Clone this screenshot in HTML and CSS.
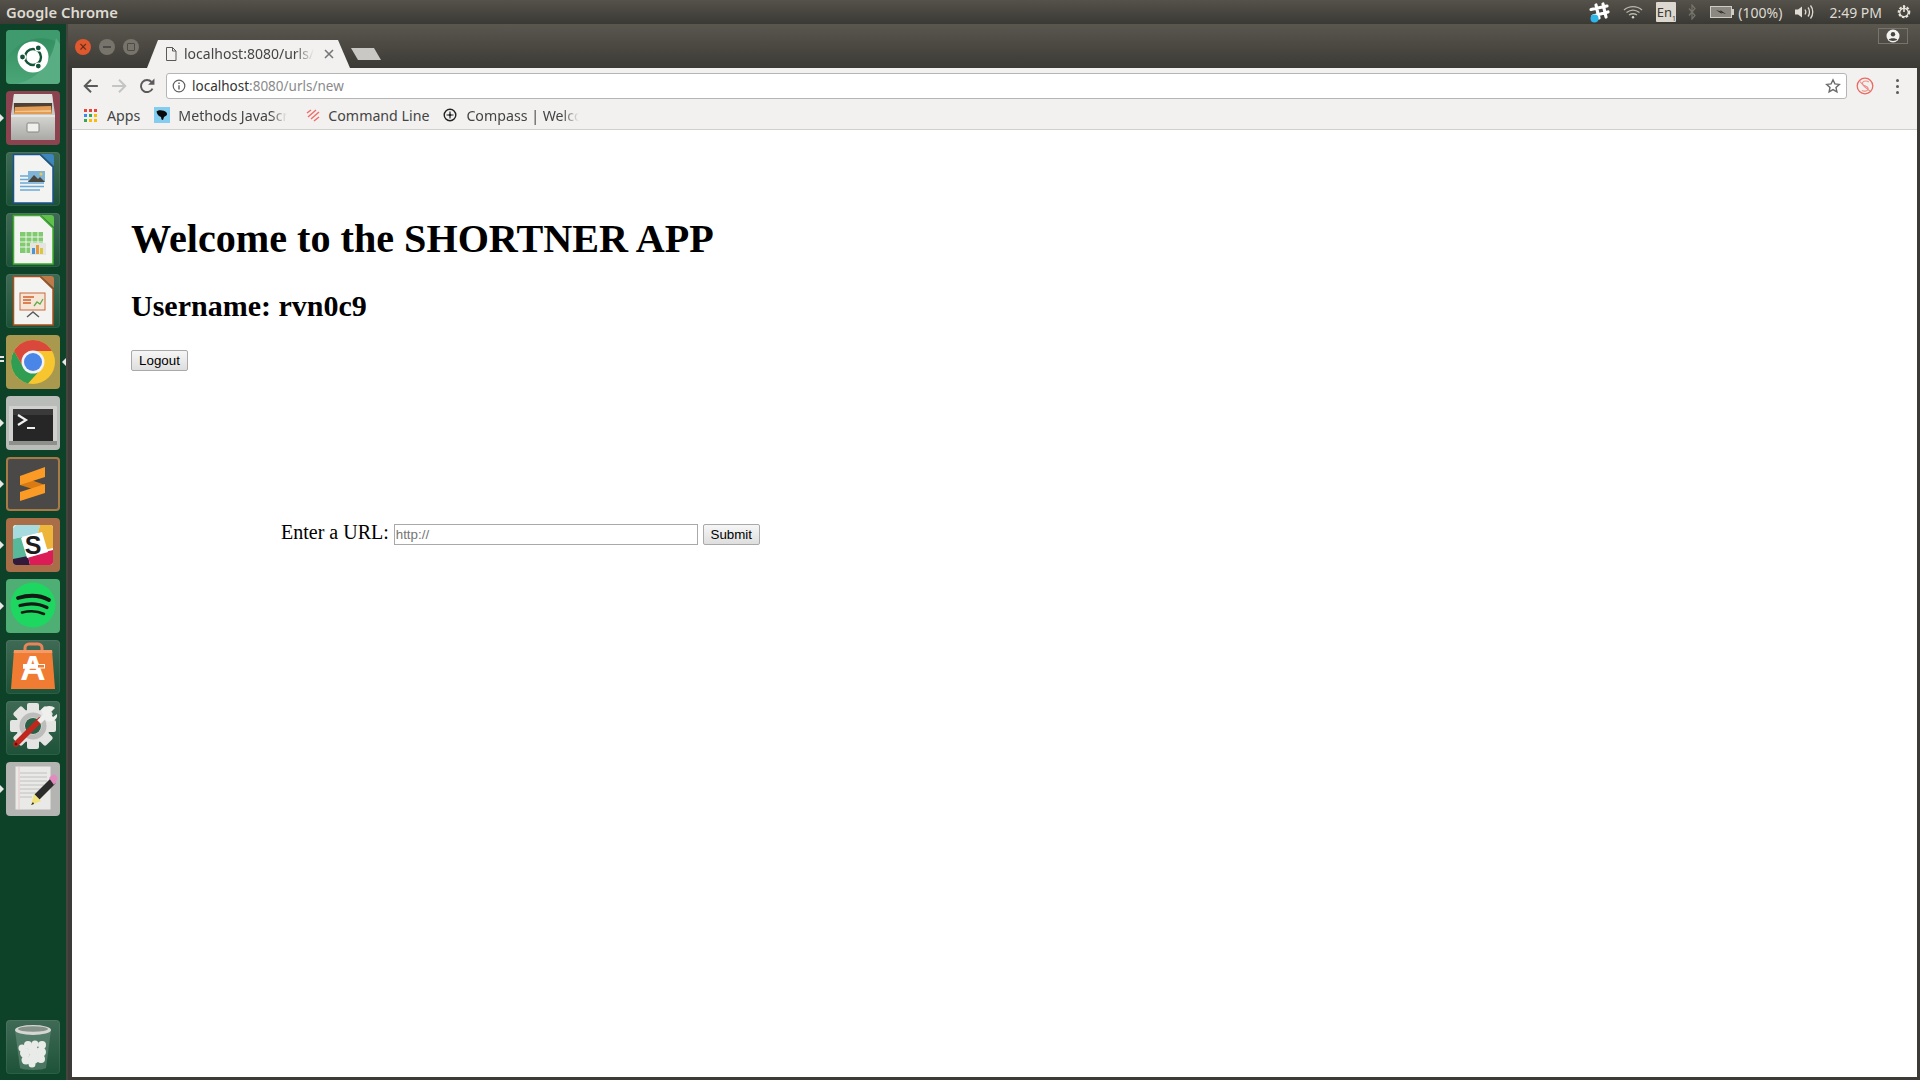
FILE: index.html
```html
<!DOCTYPE html>
<html lang="en">
<head>
<meta charset="utf-8">
<title>Google Chrome</title>
<link rel="stylesheet" href="styles.css">
</head>
<body>
<header class="panel">
  <div class="panel-title">Google Chrome</div>
  <div class="indicators">
    <svg class="ind ind-slack" width="24" height="24" viewBox="0 0 24 24"><g stroke="#fff" stroke-width="3.2" stroke-linecap="round" fill="none"><path d="M9 5l3 13M16 4l3 13M4 9.500l16-3.500M6 16l15-4"/></g><circle cx="7.500" cy="18.500" r="4" fill="#2fb5e8"/></svg>
    <svg class="ind ind-wifi" width="20" height="14" viewBox="0 0 20 14" fill="none" stroke="#b9b6ae" stroke-width="1.300"><path d="M1 5c5-4.500 13-4.500 18 0M3.500 7.500c4-3 9-3 13 0M6 10c2.500-1.600 5.500-1.600 8 0"/><circle cx="10" cy="12.200" r="1.200" fill="#d8d5cd" stroke="none"/></svg>
    <div class="ind kbd">En<sub>1</sub></div>
    <svg class="ind ind-bt" width="8" height="16" viewBox="0 0 8 16" fill="none" stroke="#77746c" stroke-width="1.200"><path d="M1 4.500l6 7L4 15V1l3 3.500-6 7"/></svg>
    <svg class="ind ind-batt" width="24" height="12" viewBox="0 0 24 12"><rect x=".5" y=".5" width="21" height="11" fill="#8a8880" stroke="#cfccc4"/><rect x="22" y="3" width="2" height="6" fill="#cfccc4"/><path d="M6 4l5 1.500L10 4l6 4-5-1.500 1 1.500z" fill="#2e2c28"/></svg>
    <div class="ind batt-text">(100%)</div>
    <svg class="ind ind-vol" width="20" height="16" viewBox="0 0 20 16" fill="none" stroke="#dedbd3" stroke-width="1.300"><path d="M1 5.500h3L8 2.500v11L4 10.500H1z" fill="#dedbd3" stroke="none"/><path d="M11 5.500c1 1.500 1 3.500 0 5M14 3.500c2 2.500 2 6.500 0 9M16.500 1.500c3 3.500 3 9.500 0 13"/></svg>
    <div class="ind clock">2:49 PM</div>
    <svg class="ind ind-power" width="16" height="16" viewBox="0 0 16 16"><circle cx="8" cy="8" r="5.200" fill="none" stroke="#e6e3db" stroke-width="2.200" stroke-dasharray="2.400 1.400"/><circle cx="8" cy="8.500" r="4.200" fill="none" stroke="#e6e3db" stroke-width="1.200"/><path d="M8 1v7" stroke="#e6e3db" stroke-width="1.600"/></svg>
  </div>
</header>
<div class="desk">
  <nav class="launcher">
    <div class="tile t-dash">
      <svg viewBox="0 0 54 54"><path d="M0 30C14 6 40 4 54 14V0H0z" fill="#3f9a6d"/><path d="M10 54C30 50 46 34 50 8l4 6v40z" fill="#58ad83"/><circle cx="27" cy="27" r="15.500" fill="#fff"/><circle cx="27" cy="27" r="8" fill="none" stroke="#14553a" stroke-width="2.400"/><g fill="#14553a" stroke="#fff" stroke-width="1.200"><circle cx="16.500" cy="27" r="3"/><circle cx="32.300" cy="17.900" r="3"/><circle cx="32.300" cy="36.100" r="3"/></g></svg>
    </div>
    <div class="tile t-files pip">
      <svg viewBox="0 0 54 54"><defs><linearGradient id="cab" x1="0" y1="0" x2="0" y2="1"><stop offset="0" stop-color="#d6d6d2"/><stop offset="1" stop-color="#a9a9a5"/></linearGradient></defs><path d="M8 3h38l3 20v26H5V23z" fill="#c9c9c5"/><path d="M8 3h38l1 9H7z" fill="#e2e2de"/><rect x="8" y="12" width="38" height="11" fill="#4e4034"/><path d="M9 16l36-1 1 8H8z" fill="#e29c56"/><path d="M9 20l36-1v2H9z" fill="#f2c48a"/><path d="M5 24h44v25H5z" fill="url(#cab)"/><path d="M5 24h44v2H5z" fill="#e6e6e2"/><rect x="21" y="32" width="12" height="9" rx="1" fill="#efefed" stroke="#868682"/></svg>
    </div>
    <div class="tile t-dark">
      <svg viewBox="0 0 54 54"><path d="M7.500 2.500H34L47 15v36H7.500z" fill="#f3f3f1" stroke="#19528c" stroke-width="1.500"/><path d="M35 2h10a3 3 0 0 1 3 3v9z" fill="#3d86bd"/><g stroke="#6aa9d6" stroke-width="1.400"><path d="M14 24h24M14 27.500h24M14 31h24M14 34.500h24M14 38h20"/></g><rect x="22" y="19" width="17" height="11" fill="#7fb4d6"/><path d="M22 30l6-7 4 4 2-2 5 5z" fill="#4a473f"/><circle cx="35" cy="22" r="1.600" fill="#e8c85a"/></svg>
    </div>
    <div class="tile t-dark">
      <svg viewBox="0 0 54 54"><path d="M7.500 2.500H34L47 15v36H7.500z" fill="#f3f3f1" stroke="#3fae2a" stroke-width="1.500"/><path d="M35 2h10a3 3 0 0 1 3 3v9z" fill="#5fc04a"/><rect x="14" y="19" width="23" height="21" fill="#7fcb6e"/><g stroke="#f3f3f1" stroke-width="1"><path d="M14 24h23M14 29h23M14 34h23M20 19v21M26 19v21M32 19v21"/></g><rect x="24" y="30" width="16" height="12" fill="#e4e4e1"/><rect x="26" y="35" width="3" height="6" fill="#4f95cf"/><rect x="30" y="32" width="3" height="9" fill="#e59a3e"/><rect x="34" y="35" width="3" height="6" fill="#d7c742"/></svg>
    </div>
    <div class="tile t-dark">
      <svg viewBox="0 0 54 54"><path d="M7.500 2.500H34L47 15v36H7.500z" fill="#f3f3f1" stroke="#a9501f" stroke-width="1.500"/><path d="M35 2h10a3 3 0 0 1 3 3v9z" fill="#c07a4a"/><rect x="14" y="19" width="25" height="17" fill="#f6e6d8" stroke="#c8683a"/><path d="M17 23h11M17 26h8M17 29h8" stroke="#d2602a" stroke-width="1.300"/><path d="M28 32l3-4 3 2 3-5" stroke="#5fae4a" stroke-width="1.300" fill="none"/><path d="M21 43l6-5 6 5" stroke="#5c5c5c" stroke-width="1.500" fill="none"/></svg>
    </div>
    <div class="tile t-chrome pip-double pip-active">
      <svg viewBox="0 0 54 54"><circle cx="27" cy="27" r="22" fill="#f7c62f"/><path d="M8 16A22 22 0 0 0 22 48.400L36.500 32.500H17.500z" fill="#2f9e53"/><path d="M46 16A22 22 0 0 0 8 16l9.500 16.500L27 16z" fill="#d9483b"/><circle cx="27" cy="27" r="11.500" fill="#f2f2f2"/><circle cx="27" cy="27" r="9" fill="#4a86e8"/></svg>
    </div>
    <div class="tile t-term pip">
      <svg viewBox="0 0 54 54"><rect x="3" y="10" width="48" height="39" rx="1" fill="#d0d1cf"/><rect x="3" y="45" width="48" height="4" fill="#8e908c"/><rect x="7" y="13" width="40" height="32" fill="#262626"/><path d="M7 13h40v6H7z" fill="#3a3a3a"/><path d="M12 19l8 5-8 5" stroke="#f0f0f0" stroke-width="2.200" fill="none"/><path d="M21 32h8" stroke="#f0f0f0" stroke-width="2"/></svg>
    </div>
    <div class="tile t-subl pip">
      <svg viewBox="0 0 54 54"><path d="M14 19l25 9v8L14 28z" fill="#d97a12"/><path d="M14 19l25-9v10l-25 8z" fill="#fb9a25"/><path d="M14 35l25-8v9l-25 8z" fill="#fb9a25"/></svg>
    </div>
    <div class="tile t-slack pip">
      <svg viewBox="0 0 54 54"><rect x="7" y="7" width="40" height="40" rx="3" fill="#fff"/><path d="M10 7h24l-2 8-25 6V10z" fill="#a6dbe0"/><path d="M34 7h10a3 3 0 0 1 3 3v20l-9 2-6-17z" fill="#edb63b"/><path d="M7 21l9-2 6 21-15 4z" fill="#57b99a"/><path d="M7 41l15-3 2 9H10a3 3 0 0 1-3-3z" fill="#33193a"/><path d="M24 47l-2-9 25-6v12a3 3 0 0 1-3 3z" fill="#dc1c57"/><path d="M15 20l21-6 6 20-21 6z" fill="#fff"/><text x="27" y="36" class="slack-s">S</text></svg>
    </div>
    <div class="tile t-spotify pip">
      <svg viewBox="0 0 54 54"><circle cx="27" cy="26" r="22.500" fill="#1ed760"/><g stroke="#111a14" stroke-linecap="round" fill="none"><path d="M12 19c10-3 22-3 31 2" stroke-width="3.800"/><path d="M14 26.500c9-2.500 19-2 27 2" stroke-width="3.200"/><path d="M16 33.500c8-2 16-1.500 22 1.500" stroke-width="2.600"/></g></svg>
    </div>
    <div class="tile t-dark">
      <svg viewBox="0 0 54 54"><path d="M19 13V8a4 4 0 0 1 4-4h9a4 4 0 0 1 4 4v5" fill="none" stroke="#e9835a" stroke-width="3"/><path d="M8 10h38l3 39H5z" fill="#f07c34"/><path d="M8 10h38l.4 3H7.600z" fill="#f39a66"/><text x="27" y="40" class="bag-a">A</text><rect x="17.500" y="24.500" width="21" height="3.500" fill="#f07c34" stroke="#fff"/><rect x="17" y="24" width="15" height="4.500" fill="#fff"/></svg>
    </div>
    <div class="tile t-dark">
      <svg viewBox="0 0 54 54"><g fill="#e4e4e2"><circle cx="27" cy="25" r="17"/><rect x="21" y="2" width="12" height="46" rx="2"/><rect x="4" y="19" width="46" height="12" rx="2"/><rect x="21" y="2" width="12" height="46" rx="2" transform="rotate(45 27 25)"/><rect x="21" y="2" width="12" height="46" rx="2" transform="rotate(-45 27 25)"/></g><circle cx="27" cy="25" r="8" fill="#2a5e45"/><circle cx="27" cy="25" r="11" fill="none" stroke="#bcbcba" stroke-width="5"/><path d="M10 43L34 19" stroke="#c0281e" stroke-width="5.500" stroke-linecap="round"/><path d="M33 21l6-6" stroke="#f0f0ee" stroke-width="5"/><path d="M35 9c4-5 11-5 14-2l-5 5 3 4 4-3c1 5-4 9-11 7z" fill="#efefed"/><circle cx="10" cy="43" r="1.500" fill="#5c120c"/></svg>
    </div>
    <div class="tile t-edit pip">
      <svg viewBox="0 0 54 54"><rect x="9" y="4" width="36" height="44" fill="#e9e9e7" stroke="#b4b4b2"/><g stroke="#c0c0be" stroke-width="1"><path d="M14 11h27M14 15h27M14 19h27M14 23h24M14 27h20M14 31h16M14 35h12"/></g><path d="M13 4v44" stroke="#e8c6c6"/><path d="M31 35L47 19" stroke="#2b2b2b" stroke-width="7"/><path d="M43 16l2-2a3.500 3.500 0 0 1 5.500 4.500L50 20l-2 3z" fill="#e58ac0"/><path d="M28 32l7 7-10 4z" fill="#f2e27a"/><path d="M27 40l-2 3 3-1z" fill="#222"/></svg>
    </div>
    <div class="tile t-dark t-trash">
      <svg viewBox="0 0 54 54"><path d="M9 10l5 38c4 2.500 22 2.500 26 0l5-38z" fill="#7d9f8e" fill-opacity=".45"/><g fill="#e9ebe8"><circle cx="16" cy="28" r="3.500"/><circle cx="22" cy="25" r="4"/><circle cx="29" cy="24" r="3.500"/><circle cx="36" cy="25" r="4"/><circle cx="19" cy="33" r="5"/><circle cx="27" cy="30" r="5"/><circle cx="35" cy="32" r="5"/><circle cx="20" cy="40" r="4.500"/><circle cx="28" cy="38" r="5.500"/><circle cx="35" cy="39" r="4"/><circle cx="26" cy="44" r="3.500"/></g><ellipse cx="27" cy="10" rx="18" ry="5" fill="#d6d6d2"/><ellipse cx="27" cy="9" rx="15" ry="2.800" fill="#84928a"/></svg>
    </div>
  </nav>
  <main class="window">
    <div class="titlebar">
      <div class="controls">
        <span class="ctl ctl-close">×</span>
        <span class="ctl ctl-min"><i class="ctl-line"></i></span>
        <span class="ctl ctl-max"><i class="ctl-box"></i></span>
      </div>
      <div class="tab">
        <svg class="tab-file" width="12" height="14" viewBox="0 0 12 14" fill="none" stroke="#5a5a5a"><path d="M1.500.5h6l3.500 3.500v9.500H1.500zM7.500.5V4H11"/></svg>
        <span class="tab-title">localhost:8080/urls/new</span>
        <svg class="tab-close" width="10" height="10" viewBox="0 0 10 10" stroke="#777" stroke-width="1.600"><path d="M1 1l8 8M9 1L1 9"/></svg>
      </div>
      <div class="newtab"></div>
      <div class="profile">
        <svg width="16" height="14" viewBox="0 0 14 14"><circle cx="7" cy="7" r="6.500" fill="#f2f1f0"/><circle cx="7" cy="5.200" r="2.200" fill="#45433d"/><path d="M2.800 10.800c1-2 7.400-2 8.400 0-1.500 1.500-6.900 1.500-8.400 0z" fill="#45433d"/></svg>
      </div>
    </div>
    <div class="toolbar">
      <button class="nav-btn" type="button" aria-label="Back"><svg width="16" height="16" viewBox="0 0 14 14" fill="none" stroke="#5a5a5a" stroke-width="1.700"><path d="M13 7H2M7 1.500L1.500 7 7 12.500"/></svg></button>
      <button class="nav-btn" type="button" aria-label="Forward"><svg width="16" height="16" viewBox="0 0 14 14" fill="none" stroke="#c4c4c4" stroke-width="1.700"><path d="M1 7h11M7 1.500L12.500 7 7 12.500"/></svg></button>
      <button class="nav-btn" type="button" aria-label="Reload"><svg width="16" height="16" viewBox="0 0 14 14" fill="none" stroke="#5a5a5a" stroke-width="1.700"><path d="M11.800 9.300A5.300 5.300 0 1 1 11 3.500"/><path d="M13.500 0.500v5.500H8z" fill="#5a5a5a" stroke="none"/></svg></button>
      <div class="omnibox">
        <svg class="omni-info" width="14" height="14" viewBox="0 0 14 14" fill="none" stroke="#5f5f5f" stroke-width="1.200"><circle cx="7" cy="7" r="5.800"/><path d="M7 6.200V10.500M7 3.500v1.500" stroke-width="1.400"/></svg>
        <span class="omni-url">localhost<span class="omni-dim">:8080/urls/new</span></span>
        <svg class="omni-star" width="16" height="16" viewBox="0 0 16 16" fill="none" stroke="#6a6a6a" stroke-width="1.400"><path d="M8 1.800l1.900 4.100 4.400.5-3.300 3 .9 4.400L8 11.600l-3.900 2.200.9-4.400-3.300-3 4.400-.5z"/></svg>
      </div>
      <div class="ext"><svg width="18" height="18" viewBox="0 0 18 18" fill="none" stroke="#ee8f88" stroke-width="1.100"><circle cx="9" cy="9" r="7.800" stroke="#ea6a62" stroke-width="1.300"/><path d="M12.800 5C10 3 5.600 4.200 6.600 7c.9 2.400 5.400 1.800 5.600 4.400.2 2.600-3.600 3.500-6.400 2M4 4.500c2 3 6 7 10 9.500"/></svg></div>
      <div class="menu"><i class="dot"></i><i class="dot"></i><i class="dot"></i></div>
    </div>
    <div class="bookmarks">
      <a class="bm bm-apps">
        <svg width="13" height="13" viewBox="0 0 13 13"><rect width="3" height="3" fill="#e8453c"/><rect x="5" width="3" height="3" fill="#e8453c"/><rect x="10" width="3" height="3" fill="#e8453c"/><rect y="5" width="3" height="3" fill="#4285f4"/><rect x="5" y="5" width="3" height="3" fill="#34a853"/><rect x="10" y="5" width="3" height="3" fill="#fbbc05"/><rect y="10" width="3" height="3" fill="#34a853"/><rect x="5" y="10" width="3" height="3" fill="#fbbc05"/><rect x="10" y="10" width="3" height="3" fill="#fbbc05"/></svg>
        <span>Apps</span>
      </a>
      <a class="bm bm-methods">
        <svg width="16" height="16" viewBox="0 0 16 16"><rect width="16" height="16" fill="#83cdf0"/><path d="M2.500 4.500C5 2.500 10 3 12.500 5.500c1 1.500.5 3-1 3.500l-1.500 1-1 3-1.500-.5-.5-2.500C5 9.500 3 7.500 2.500 4.500z" fill="#0a0a0a"/></svg>
        <span class="bm-fade">Methods JavaScript</span>
      </a>
      <a class="bm bm-cmd">
        <svg width="14" height="14" viewBox="0 0 14 14" stroke="#ee6f6a" stroke-width="1.500"><path d="M1 5l4-3M2 9l8-7M5 11l8-7M8 13l5-4"/></svg>
        <span>Command Line</span>
      </a>
      <a class="bm bm-compass">
        <svg width="14" height="14" viewBox="0 0 14 14" fill="none" stroke="#222" stroke-width="1.400"><circle cx="7" cy="7" r="5.800"/><path d="M7 3.500v7M3.500 7h7" stroke-width="1.200"/><circle cx="7" cy="7" r="1.300" fill="#222" stroke="none"/></svg>
        <span class="bm-fade">Compass | Welcome</span>
      </a>
    </div>
    <section class="page">
      <h1 class="page-title">Welcome to the SHORTNER APP</h1>
      <h2 class="page-user">Username: rvn0c9</h2>
      <button class="btn" type="button">Logout</button>
      <form class="url-form">
        <label class="url-label" for="url">Enter a URL:</label>
        <input class="url-input" id="url" type="text" placeholder="http://">
        <button class="btn" type="button">Submit</button>
      </form>
    </section>
  </main>
</div>
</body>
</html>
```
FILE: styles.css
```css
html, body { margin: 0; padding: 0; width: 1920px; height: 1080px; overflow: hidden; }
body { display: flex; flex-direction: column; background: #3c3b37; font-family: "Noto Sans", "Open Sans", sans-serif; }
svg { display: block; flex: none; }

.panel { height: 24px; flex: none; display: flex; align-items: center; justify-content: space-between; background: linear-gradient(#55524b, #3b3934); }
.panel-title { margin: -1px 0 0 6px; font-size: 14.800px; font-weight: 600; color: #dfdbd2; }
.indicators { display: flex; align-items: center; height: 24px; color: #dfdbd2; font-size: 14px; }
.ind-slack { margin-right: 12px; }
.ind-wifi { margin-right: 13px; }
.kbd { width: 20px; height: 20px; background: #dcd8d0; color: #3c3b37; font-size: 13px; line-height: 20px; text-align: center; border-radius: 1px; margin-right: 12px; overflow: hidden; white-space: nowrap; }
.kbd sub { font-size: 7px; line-height: 0; }
.ind-bt { margin-right: 14px; }
.ind-batt { margin-right: 4px; }
.batt-text { margin-right: 12px; }
.ind-vol { margin-right: 15px; }
.clock { margin-right: 14px; }
.ind-power { margin-right: 8px; }

.desk { flex: 1; display: flex; min-height: 0; }

.launcher { width: 68px; flex: none; border-right: 2px solid #45443f; background: #0e4228; display: flex; flex-direction: column; align-items: center; gap: 7px; padding: 6px 0; box-sizing: border-box; }
.tile { position: relative; width: 54px; height: 54px; flex: none; border-radius: 4px; overflow: visible; }
.tile svg { width: 54px; height: 54px; }
.t-dash { background: linear-gradient(#2f8a5c, #4aa577); overflow: hidden; }
.t-files { background: #8c4350; }
.t-dark { background: linear-gradient(#3f6a55, #1d5238); box-shadow: inset 0 0 0 1px rgba(255, 255, 255, .07); }
.t-chrome { background: #a8994f; }
.t-term { background: #b9bcb9; }
.t-subl { background: #4a4947; box-shadow: inset 0 0 0 2px #a87a46; }
.t-slack { background: #a96e48; }
.t-spotify { background: #4fae74; }
.t-edit { background: #b4b5b3; }
.t-trash { margin-top: auto; }
.slack-s { font-family: "Liberation Sans", sans-serif; font-weight: 700; font-size: 25px; text-anchor: middle; fill: #1c1c1c; }
.bag-a { font-family: "Liberation Sans", sans-serif; font-weight: 700; font-size: 35px; text-anchor: middle; fill: #fff; }
.pip::before, .pip-double::before { content: ""; position: absolute; left: -6px; top: 23px; border-left: 4px solid #e8e8e8; border-top: 4px solid transparent; border-bottom: 4px solid transparent; }
.pip-double::before { top: 21px; left: -6px; width: 4px; height: 2px; border: 0; background: #e8e8e8; box-shadow: 0 4px 0 #e8e8e8; }
.pip-active::after { content: ""; position: absolute; right: -6px; top: 23px; border-right: 4px solid #e8e8e8; border-top: 4px solid transparent; border-bottom: 4px solid transparent; }

.window { flex: 1; min-width: 0; display: flex; flex-direction: column; padding: 0 3px 3px 4px; background: #3c3b37; border-radius: 4px 4px 0 0; }
.titlebar { height: 44px; flex: none; display: flex; margin: 0 -3px 0 -4px; padding: 0 3px 0 4px; background: linear-gradient(#5a574f, #3c3a35); position: relative; }
.controls { display: flex; gap: 8px; padding: 15px 0 0 3px; align-items: flex-start; }
.ctl { width: 16px; height: 16px; border-radius: 50%; display: flex; align-items: center; justify-content: center; border: 0; }
.ctl-close { background: #df582e; color: #5c2a14; font-size: 14px; line-height: 16px; }
.ctl-min, .ctl-max { background: #77746b; }
.ctl-line { width: 8px; height: 2px; background: #4d4b45; }
.ctl-box { width: 6px; height: 6px; border: 1.500px solid #4d4b45; border-radius: 1px; }
.tab { margin: 16px 0 0 8px; width: 203px; height: 28px; box-sizing: border-box; background: #f2f1f0; clip-path: polygon(0 100%, 11px 0, 191px 0, 100% 100%); display: flex; align-items: center; padding: 0 0 1px 18px; }
.tab-title { width: 130px; margin-left: 7px; overflow: hidden; white-space: nowrap; font-size: 14px; color: #454545; -webkit-mask-image: linear-gradient(90deg, #000 85%, transparent); mask-image: linear-gradient(90deg, #000 85%, transparent); }
.tab-close { margin-left: 10px; }
.newtab { margin: 24px 0 0 1px; width: 30px; height: 12px; background: #c9c8c4; clip-path: polygon(0 0, 23px 0, 100% 100%, 7px 100%); }
.profile { position: absolute; right: 12px; top: 4px; width: 30px; height: 16px; box-sizing: border-box; border: 1px solid #77746b; display: flex; align-items: center; justify-content: center; }

.toolbar { height: 34px; flex: none; box-sizing: border-box; display: flex; align-items: center; background: #f2f1f0; padding: 2px 6px 0 5px; }
.nav-btn { width: 28px; height: 26px; padding: 0; border: 0; background: none; display: flex; align-items: center; justify-content: center; }
.omnibox { flex: 1; height: 26px; margin-left: 5px; box-sizing: border-box; background: #fff; border: 1px solid #b5b5b5; border-radius: 3px; display: flex; align-items: center; padding: 0 5px 0 5px; }
.omni-url { margin-left: 6px; flex: 1; font-size: 13.500px; color: #333; white-space: nowrap; }
.omni-dim { color: #8a8a8a; }
.ext, .menu { width: 28px; height: 26px; margin-left: 4px; display: flex; align-items: center; justify-content: center; }
.menu { flex-direction: column; gap: 3px; }
.dot { width: 3px; height: 3px; border-radius: 50%; background: #5a5a5a; }

.bookmarks { height: 28px; flex: none; box-sizing: border-box; display: flex; align-items: center; background: #f2f1f0; border-bottom: 1px solid #d0d0ce; padding: 0 0 1px 12px; gap: 13px; font-size: 14.200px; color: #444; }
.bm { display: flex; align-items: center; gap: 8px; white-space: nowrap; }
.bm-apps { gap: 10px; }
.bm-methods { margin-left: 1px; }
.bm-cmd { margin-left: 6px; margin-right: 1px; }
.bm-compass { gap: 9px; }
.bm-fade { width: 113px; overflow: hidden; -webkit-mask-image: linear-gradient(90deg, #000 85%, transparent); mask-image: linear-gradient(90deg, #000 85%, transparent); }
.bm-methods .bm-fade { width: 109px; }

.page { flex: 1; min-height: 0; background: #fff; padding: 86px 0 0 59px; font-family: "Liberation Serif", serif; color: #000; }
.page-title { margin: 0; font-size: 40.150px; line-height: 46px; font-weight: 700; }
.page-user { margin: 27px 0 27px; font-size: 30px; line-height: 34px; font-weight: 700; }
.btn { display: block; width: 57px; height: 21px; padding: 0; box-sizing: border-box; font-family: "Liberation Sans", sans-serif; font-size: 13.333px; color: #000; background: linear-gradient(#f6f6f6, #dedede); border: 1px solid #a9a9a9; border-radius: 2px; }
.url-form { display: flex; align-items: center; margin: 153px 0 0 150px; }
.url-label { font-size: 20px; line-height: 21px; margin-right: 5px; margin-top: -5px; }
.url-input { width: 304px; height: 21px; box-sizing: border-box; padding: 1px 1px; border: 1px solid #a9a9a9; font-family: "Liberation Sans", sans-serif; font-size: 13.333px; margin-right: 5px; }
.url-input::placeholder { color: #757575; opacity: 1; }
```
